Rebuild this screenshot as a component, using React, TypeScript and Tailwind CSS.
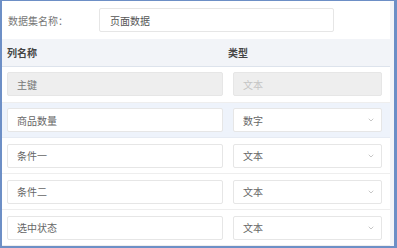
import { ChevronDown } from "lucide-react";

const rows = [
  { name: "主键", type: "文本", disabled: true },
  { name: "商品数量", type: "数字", active: true },
  { name: "条件一", type: "文本" },
  { name: "条件二", type: "文本" },
  { name: "选中状态", type: "文本" },
];

export default function App() {
  return (
    <div
      className="w-[397px] h-[248px] overflow-hidden bg-white border-l-2 border-r-[3px] border-t border-b-2 border-[#6d8fc6] text-[10px] text-[#666]"
      style={{ fontFamily: '"Noto Sans CJK SC", "Noto Sans", sans-serif' }}
    >
      <div className="flex h-full">
        <div className="flex-1 flex flex-col">
          {/* 数据集名称 */}
          <div className="flex items-center h-[38px] pt-[1px]">
            <span className="w-[97px] pl-[6px] text-[#777]">数据集名称：</span>
            <div className="w-[235px] h-[24px] border border-[#e6e6e6] rounded-[2px] flex items-center px-[10px] text-[#555]">
              页面数据
            </div>
          </div>

          {/* 表头 */}
          <div className="flex items-center h-[28px] bg-[#f2f4f8] border-b border-[#dde3ec] font-bold text-[#444]">
            <span className="w-[226px] pl-[5px]">列名称</span>
            <span>类型</span>
          </div>

          {rows.map((r) => (
            <div
              key={r.name}
              className={`flex items-center h-[36px] px-[5px] border-b ${
                r.active ? "bg-[#eef3fb] border-[#e6ebf3]" : "border-[#eeeeee]"
              }`}
            >
              <div
                className={`w-[216px] h-[24px] rounded-[2px] border flex items-center px-[9px] ${
                  r.disabled ? "bg-[#eeeeee] border-[#e6e6e6] text-[#777]" : "bg-white border-[#e6e6e6]"
                }`}
              >
                {r.name}
              </div>
              <div
                className={`ml-[10px] w-[149px] h-[24px] rounded-[2px] border flex items-center justify-between pl-[9px] pr-[6px] ${
                  r.disabled ? "bg-[#eeeeee] border-[#e6e6e6] text-[#c4c4c4]" : "bg-white border-[#e6e6e6]"
                }`}
              >
                <span>{r.type}</span>
                {!r.disabled && <ChevronDown size={8} strokeWidth={2} className="text-[#aaa]" />}
              </div>
            </div>
          ))}
        </div>
        <div className="w-[4px] bg-[#f4f5f8]" />
      </div>
    </div>
  );
}
